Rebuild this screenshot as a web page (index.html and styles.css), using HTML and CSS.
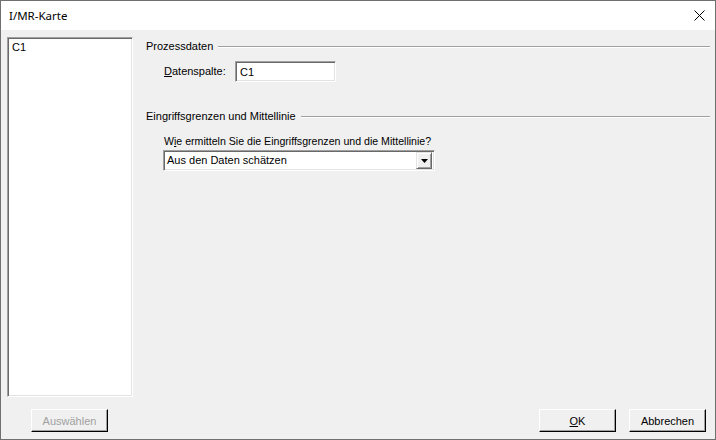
FILE: index.html
```html
<!DOCTYPE html>
<html lang="de">
<head>
<meta charset="utf-8">
<title>I/MR-Karte</title>
<link rel="stylesheet" href="styles.css">
</head>
<body>
<div class="window">
  <div class="titlebar">
    <span class="title">I/MR-Karte</span>
    <span class="close"><svg width="11" height="11" viewBox="0 0 11 11"><path d="M0.5 0.5 L10.5 10.5 M10.5 0.5 L0.5 10.5" stroke="#000" stroke-width="1" fill="none"/></svg></span>
  </div>
  <div class="client">
    <div class="main">
      <div class="listbox"><div class="item">C1</div></div>
      <div class="panel">
        <div class="group-head"><span class="group-title">Prozessdaten</span><span class="rule"></span></div>
        <div class="field-row">
          <span class="label"><u>D</u>atenspalte:</span>
          <div class="textbox">C1</div>
        </div>
        <div class="group-head second"><span class="group-title">Eingriffsgrenzen und Mittellinie</span><span class="rule"></span></div>
        <div class="question">W<u>i</u>e ermitteln Sie die Eingriffsgrenzen und die Mittellinie?</div>
        <div class="combo">
          <span class="combo-text">Aus den Daten schätzen</span>
          <span class="drop"><svg width="7" height="4" viewBox="0 0 7 4"><path d="M0 0 H7 L3.5 4 Z" fill="#000"/></svg></span>
        </div>
      </div>
    </div>
    <div class="footer">
      <button class="btn select" disabled>Auswählen</button>
      <span class="spacer"></span>
      <button class="btn"><u>O</u>K</button>
      <button class="btn">Abbrechen</button>
    </div>
  </div>
</div>
</body>
</html>
```

FILE: styles.css
```css
* { box-sizing: border-box; }
html, body { margin: 0; padding: 0; }
body {
  width: 716px;
  height: 440px;
  background: #f0f0f0;
  font-family: "Liberation Sans", Arial, sans-serif;
  font-size: 11px;
  color: #000;
}
.window {
  width: 716px;
  height: 440px;
  border: 1px solid #707070;
  display: flex;
  flex-direction: column;
  background: #f0f0f0;
}
.titlebar {
  height: 29px;
  background: #fff;
  display: flex;
  align-items: center;
  padding-left: 8px;
}
.title {
  font-family: "Noto Sans", "Open Sans", sans-serif;
  font-size: 11.5px;
  line-height: 16px;
  margin-top: 1px;
}
.close {
  margin-left: auto;
  width: 32px;
  height: 29px;
  display: flex;
  align-items: center;
  justify-content: center;
}
.client {
  flex: 1;
  display: flex;
  flex-direction: column;
  padding: 7px 9px 0 6px;
}
.main {
  display: flex;
}
.listbox {
  width: 126px;
  height: 360px;
  background: #fff;
  border: 1px solid;
  border-color: #a0a0a0 #fff #fff #a0a0a0;
  box-shadow: inset 1px 1px 0 #696969, inset -1px -1px 0 #e3e3e3;
  padding: 3px 0 0 4px;
}
.item { line-height: 13px; }
.panel {
  flex: 1;
  margin-left: 13px;
  margin-right: -4px;
  padding-top: 3px;
}
.group-head {
  display: flex;
  align-items: center;
  line-height: 13px;
}
.group-head.second { margin-top: 28px; }
.group-title { white-space: nowrap; }
.rule {
  flex: 1;
  margin-left: 5px;
  height: 2px;
  border-top: 1px solid #a0a0a0;
  border-bottom: 1px solid #fff;
}
.field-row {
  display: flex;
  align-items: center;
  margin-top: 8px;
  padding-left: 18px;
  height: 21px;
}
.label { width: 71px; line-height: 13px; }
.textbox {
  width: 101px;
  height: 21px;
  background: #fff;
  border: 1px solid;
  border-color: #a0a0a0 #fff #fff #a0a0a0;
  box-shadow: inset 1px 1px 0 #696969, inset -1px -1px 0 #e3e3e3;
  padding: 4px 0 0 4px;
  line-height: 13px;
}
.question {
  margin-top: 12px;
  padding-left: 18px;
  line-height: 13px;
  font-size: 10.6px;
}
.combo {
  margin-top: 2px;
  margin-left: 17px;
  width: 272px;
  height: 21px;
  background: #fff;
  border: 1px solid;
  border-color: #a0a0a0 #fff #fff #a0a0a0;
  box-shadow: inset 1px 1px 0 #696969, inset -1px -1px 0 #e3e3e3;
  display: flex;
  align-items: center;
  padding: 2px 2px 2px 3px;
}
.combo-text { flex: 1; line-height: 13px; }
.drop {
  width: 16px;
  height: 17px;
  background: #f0f0f0;
  border: 1px solid;
  border-color: #e3e3e3 #696969 #696969 #e3e3e3;
  box-shadow: inset 1px 1px 0 #fff, inset -1px -1px 0 #a0a0a0;
  display: flex;
  align-items: center;
  justify-content: center;
}
.footer {
  display: flex;
  margin-top: 12px;
}
.spacer { flex: 1; }
.btn {
  width: 77px;
  height: 23px;
  background: #f0f0f0;
  font-family: "Liberation Sans", Arial, sans-serif;
  font-size: 11px;
  color: #000;
  border: 1px solid;
  border-color: #fff #000 #000 #fff;
  box-shadow: inset -1px -1px 0 #a0a0a0;
  padding: 0;
  margin-left: 13px;
}
.btn.select { margin-left: 24px; }
.btn:disabled { color: #a0a0a0; }
```
